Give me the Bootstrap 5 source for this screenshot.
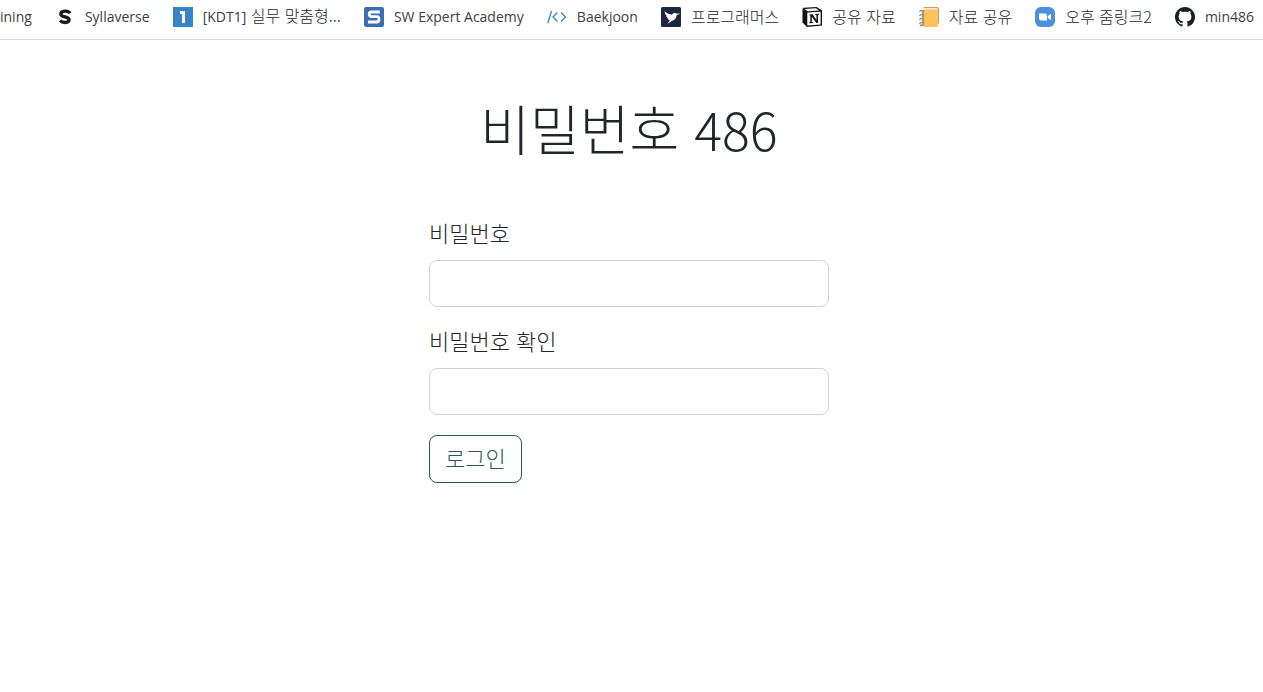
<!DOCTYPE html>
<html lang="ko">
<head>
<meta charset="utf-8">
<meta name="viewport" content="width=device-width, initial-scale=1">
<title>비밀번호 486</title>
<link href="https://cdn.jsdelivr.net/npm/bootstrap@5.3.0/dist/css/bootstrap.min.css" rel="stylesheet">
<style>
  body { font-family: "Noto Sans CJK KR", sans-serif; font-weight: 300; font-size: 22px; color: #212529; }
  .bookmarks { height: 40px; padding: 0 9px 6px 0; font-size: 16px; line-height: 20px; border-bottom: 1px solid #dadce0; }
  .bookmarks a { color: #24272a; gap: 10px; white-space: nowrap; }
  .bookmarks a > span { padding-bottom: 2px; }
  .bookmarks .latin { font-family: "Open Sans", "Noto Sans CJK KR", sans-serif; font-size: 14px; font-weight: 400; color: #3c4043; }
  .bookmarks svg { width: 20px; height: 20px; flex: none; }
  .page-title { font-size: 54px; font-weight: 300; line-height: 60px; margin: 58px 0; }
  .page-title .digits { font-size: 52px; }
  .login-page { padding-right: 17px; }
  .login-form { max-width: 400px; }
  .form-label { line-height: 30px; margin-bottom: 13px; }
  .form-control { height: 47px; border-color: #ced4da; border-radius: 8px; }
  .field { margin-bottom: 18px; }
  .field-last { margin-bottom: 20px; }
  .btn-login { --bs-btn-color: #2b5a4f; --bs-btn-border-color: #2b5a4f; --bs-btn-hover-bg: #2b5a4f; --bs-btn-hover-color: #fff;
    --bs-btn-font-size: 22px; --bs-btn-font-weight: 300; --bs-btn-line-height: 30px; --bs-btn-padding-x: 15px; --bs-btn-border-radius: 8px;
    padding-top: 6px; padding-bottom: 10px; }
</style>
</head>
<body>
<nav class="bookmarks d-flex align-items-center justify-content-between overflow-hidden" aria-label="북마크">
  <a class="d-flex align-items-center text-decoration-none latin" href="#">ining</a>
  <a class="d-flex align-items-center text-decoration-none latin" href="#">
    <svg viewBox="0 0 20 20"><path d="M15 6.200C13.500 3.500 6 3 5.800 7.100 5.600 10.600 14.300 9 14.100 12.700 13.800 16.800 7 15.800 5.100 13.500" fill="none" stroke="#16191d" stroke-width="3.300"/></svg>Syllaverse</a>
  <a class="d-flex align-items-center text-decoration-none" href="#">
    <svg viewBox="0 0 20 20"><path fill="#3585c6" d="M0 0h20v20H0z"/><path fill="#fff" d="M7 4h5v12H9V7H7z"/></svg><span><span class="latin">[KDT1]</span> 실무 맞춤형...</span></a>
  <a class="d-flex align-items-center text-decoration-none latin" href="#">
    <svg viewBox="0 0 20 20"><rect width="20" height="20" rx="2" fill="#3b6db5"/><path d="M15.8 5H7.2Q5.2 5 5.2 7.1T7.2 9.7H13Q15 9.7 15 12.2T13 15H4" fill="none" stroke="#fff" stroke-width="2.8"/></svg>SW Expert Academy</a>
  <a class="d-flex align-items-center text-decoration-none latin" href="#">
    <svg viewBox="0 0 20 20"><path d="M4.500 4 .8 16M10.500 5.500 6 10l4.500 4.500M14 5.500 18.500 10 14 14.500" fill="none" stroke="#2f86cf" stroke-width="1.300"/></svg>Baekjoon</a>
  <a class="d-flex align-items-center text-decoration-none" href="#">
    <svg viewBox="0 0 20 20"><rect width="20" height="20" rx="1.500" fill="#1e2740"/><path fill="#fff" d="m3.500 4 3 2.500 4.500 1.300c.8-1.600 2.600-2.200 4-1.300l4.500.2-3.800 1.400c-.3 3.200-1.900 5.200-4.500 5.700L6.300 17l2.500-3.600c-1.400-.6-2.200-1.500-2.200-2.700L4.600 9.500l1.600-.3-2-2z"/></svg><span>프로그래머스</span></a>
  <a class="d-flex align-items-center text-decoration-none" href="#">
    <svg viewBox="0 0 20 20"><path fill="#111" d="M1.500.8 14.700 0 20 3.500V18.500L5 20 .5 15.500V2z"/><path fill="#fff" d="m2.700 1.900 11.300-.7 3.200 2.300-11.400.7zM5.300 5.500l13.300-.8v12.800l-13.300.9z"/><path fill="#111" d="M7.200 7.400 10.600 7.200 14.500 13V8l-1.400-.2v-.9l4-.2v.9l-1.100.3v8l-1.600.1L9.800 9.800V15l1.500.2v.8l-4 .3v-.9l1-.3V8.400l-1.100-.2z"/></svg><span>공유 자료</span></a>
  <a class="d-flex align-items-center text-decoration-none" href="#">
    <svg viewBox="0 0 20 20"><rect x="4" y="0" width="16" height="17" rx="1.500" fill="#d99b4b"/><path fill="#e8edec" d="M4 1h14.500v3H4z"/><rect x="4" y="2.500" width="15" height="17.500" rx="1" fill="#fbc25d"/><path d="M4 4v14.500" stroke="#df8a3c" stroke-width="2"/><path d="M.4 4.800Q2.500 2.300 5 4.500M.4 8.800Q2.500 6.300 5 8.500M.4 12.800Q2.500 10.300 5 12.500M.4 16.800Q2.500 14.300 5 16.500M1 19Q2.500 17.500 4 18.500" fill="none" stroke="#8e9299" stroke-width="1.600"/></svg><span>자료 공유</span></a>
  <a class="d-flex align-items-center text-decoration-none" href="#">
    <svg viewBox="0 0 20 20"><rect width="20" height="20" rx="6" fill="#4a90dc"/><path fill="#fff" d="M4 6.500h6q2 0 2 2v5H6q-2 0-2-2zM12.800 9 16 6.700v6.600L12.800 11z"/></svg><span>오후 줌링크2</span></a>
  <a class="d-flex align-items-center text-decoration-none latin" href="#">
    <svg viewBox="0 0 16 16"><path fill="#1b1f23" d="M8 0C3.580 0 0 3.580 0 8c0 3.540 2.290 6.530 5.470 7.590.4.070.55-.17.55-.38 0-.19-.01-.82-.01-1.490-2.010.37-2.530-.49-2.690-.94-.09-.23-.48-.94-.82-1.130-.28-.15-.68-.52-.01-.53.63-.01 1.080.58 1.230.82.72 1.210 1.870.87 2.330.66.07-.52.28-.87.51-1.070-1.780-.2-3.640-.89-3.640-3.950 0-.87.31-1.590.82-2.150-.08-.2-.36-1.020.08-2.120 0 0 .67-.21 2.200.82.64-.18 1.320-.27 2-.27s1.360.09 2 .27c1.530-1.040 2.200-.82 2.200-.82.44 1.100.16 1.920.08 2.120.51.56.82 1.270.82 2.150 0 3.070-1.870 3.750-3.650 3.950.29.25.54.73.54 1.480 0 1.070-.01 1.930-.01 2.200 0 .21.15.46.55.38A8 8 0 0 0 16 8c0-4.420-3.580-8-8-8"/></svg>min486</a>
</nav>
<main class="container-fluid login-page">
  <h1 class="page-title text-center">비밀번호 <span class="digits">486</span></h1>
  <form class="login-form mx-auto">
    <div class="field">
      <label class="form-label d-block" for="password">비밀번호</label>
      <input class="form-control" type="password" id="password">
    </div>
    <div class="field field-last">
      <label class="form-label d-block" for="confirm">비밀번호 확인</label>
      <input class="form-control" type="password" id="confirm">
    </div>
    <button class="btn btn-login" type="submit">로그인</button>
  </form>
</main>
<script src="https://cdn.jsdelivr.net/npm/bootstrap@5.3.0/dist/js/bootstrap.bundle.min.js"></script>
</body>
</html>
